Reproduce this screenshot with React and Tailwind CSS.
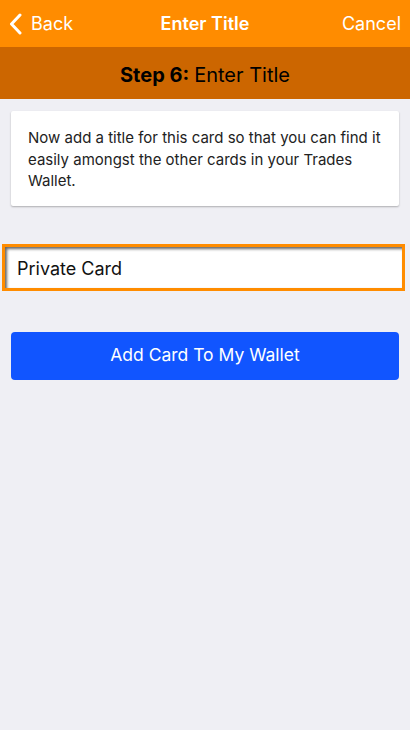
export default function App() {
  return (
    <div className="w-[410px] h-[730px] bg-[#efeff4] flex flex-col" style={{ fontFamily: 'Inter, "Noto Sans", sans-serif' }}>
      {/* Nav bar */}
      <div className="h-[47px] bg-[#ff8c00] flex items-center justify-between px-[9px] text-white relative">
        <div className="flex items-center gap-[9px]">
          <svg width="13" height="22" viewBox="0 0 13 22" fill="none">
            <path d="M11 2 L2.5 11 L11 20" stroke="white" strokeWidth="3" strokeLinecap="round" strokeLinejoin="round" />
          </svg>
          <span className="text-[18px]">Back</span>
        </div>
        <span className="absolute left-1/2 -translate-x-1/2 text-[18px] font-semibold">Enter Title</span>
        <span className="text-[18px]">Cancel</span>
      </div>

      {/* Step bar */}
      <div className="h-[52px] bg-[#cc6600] flex items-center justify-center pt-[3px] text-[20px] text-black">
        <span className="font-bold">Step 6:</span>
        <span className="ml-[5px]">Enter Title</span>
      </div>

      {/* Info card */}
      <div className="mx-[11px] mt-[12px] bg-white rounded-[2px] shadow-[0_1px_2px_rgba(0,0,0,0.28)] pl-[17px] pt-[16px] pb-[14px]">
        <p className="text-[15px] leading-[21.5px] text-[#222] whitespace-nowrap">
          Now add a title for this card so that you can find it
          <br />
          easily amongst the other cards in your Trades
          <br />
          Wallet.
        </p>
      </div>

      {/* Title input */}
      <div className="ml-[2px] mr-[5px] mt-[38px] border-[3px] border-[#ff8c00] bg-white h-[47px] flex items-center pt-[2px] shadow-[inset_2px_2px_3px_rgba(0,0,0,0.6)]">
        <span className="pl-[12px] text-[18px] text-[#111]">Private Card</span>
      </div>

      {/* Button */}
      <button className="mx-[11px] mt-[41px] h-[48px] rounded-[4px] bg-[#1155ff] text-white text-[17.5px] flex items-center justify-center">
        Add Card To My Wallet
      </button>
    </div>
  );
}
